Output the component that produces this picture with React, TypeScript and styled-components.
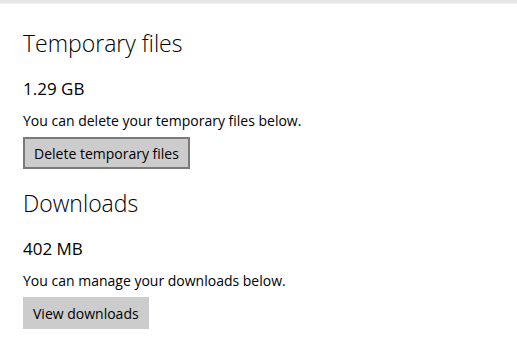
import React from "react";
import styled, { createGlobalStyle } from "styled-components";

const GlobalStyle = createGlobalStyle`
  html, body {
    margin: 0;
    padding: 0;
    background: #ffffff;
  }
  body {
    font-family: "Open Sans", "Noto Sans", sans-serif;
    color: #000000;
  }
`;

const Page = styled.div`
  width: 517px;
  height: 355px;
  overflow: hidden;
  background: #ffffff;
`;

const TopStrip = styled.div`
  height: 3px;
  background: #e6e6e6;
  border-bottom: 1px solid #f3f3f3;
`;

const Content = styled.main`
  display: flex;
  flex-direction: column;
  gap: 19px;
  padding: 24px 23px 0;
`;

const Section = styled.section`
  display: flex;
  flex-direction: column;
  align-items: flex-start;
`;

const Heading = styled.h2`
  margin: 0;
  font-size: 23px;
  font-weight: 300;
  line-height: 30px;
`;

const Size = styled.div`
  margin-top: 19px;
  font-size: 17px;
  line-height: 24px;
`;

const Note = styled.p`
  margin: 10px 0 0;
  font-size: 14px;
  line-height: 20px;
`;

const Button = styled.button<{ $bordered?: boolean }>`
  box-sizing: border-box;
  height: 32px;
  margin-top: 6px;
  padding: 0 ${(p) => (p.$bordered ? 9 : 10)}px;
  font-family: inherit;
  font-size: 14px;
  color: #000000;
  background: #cccccc;
  border: ${(p) => (p.$bordered ? "2px solid #7a7a7a" : "none")};
  cursor: pointer;
`;

type StorageItem = {
  title: string;
  size: string;
  note: string;
  action: string;
  focused?: boolean;
};

const items: StorageItem[] = [
  {
    title: "Temporary files",
    size: "1.29 GB",
    note: "You can delete your temporary files below.",
    action: "Delete temporary files",
    focused: true,
  },
  {
    title: "Downloads",
    size: "402 MB",
    note: "You can manage your downloads below.",
    action: "View downloads",
  },
];

export default function App() {
  return (
    <Page>
      <GlobalStyle />
      <TopStrip />
      <Content>
        {items.map((item) => (
          <Section key={item.title}>
            <Heading>{item.title}</Heading>
            <Size>{item.size}</Size>
            <Note>{item.note}</Note>
            <Button $bordered={item.focused}>{item.action}</Button>
          </Section>
        ))}
      </Content>
    </Page>
  );
}
